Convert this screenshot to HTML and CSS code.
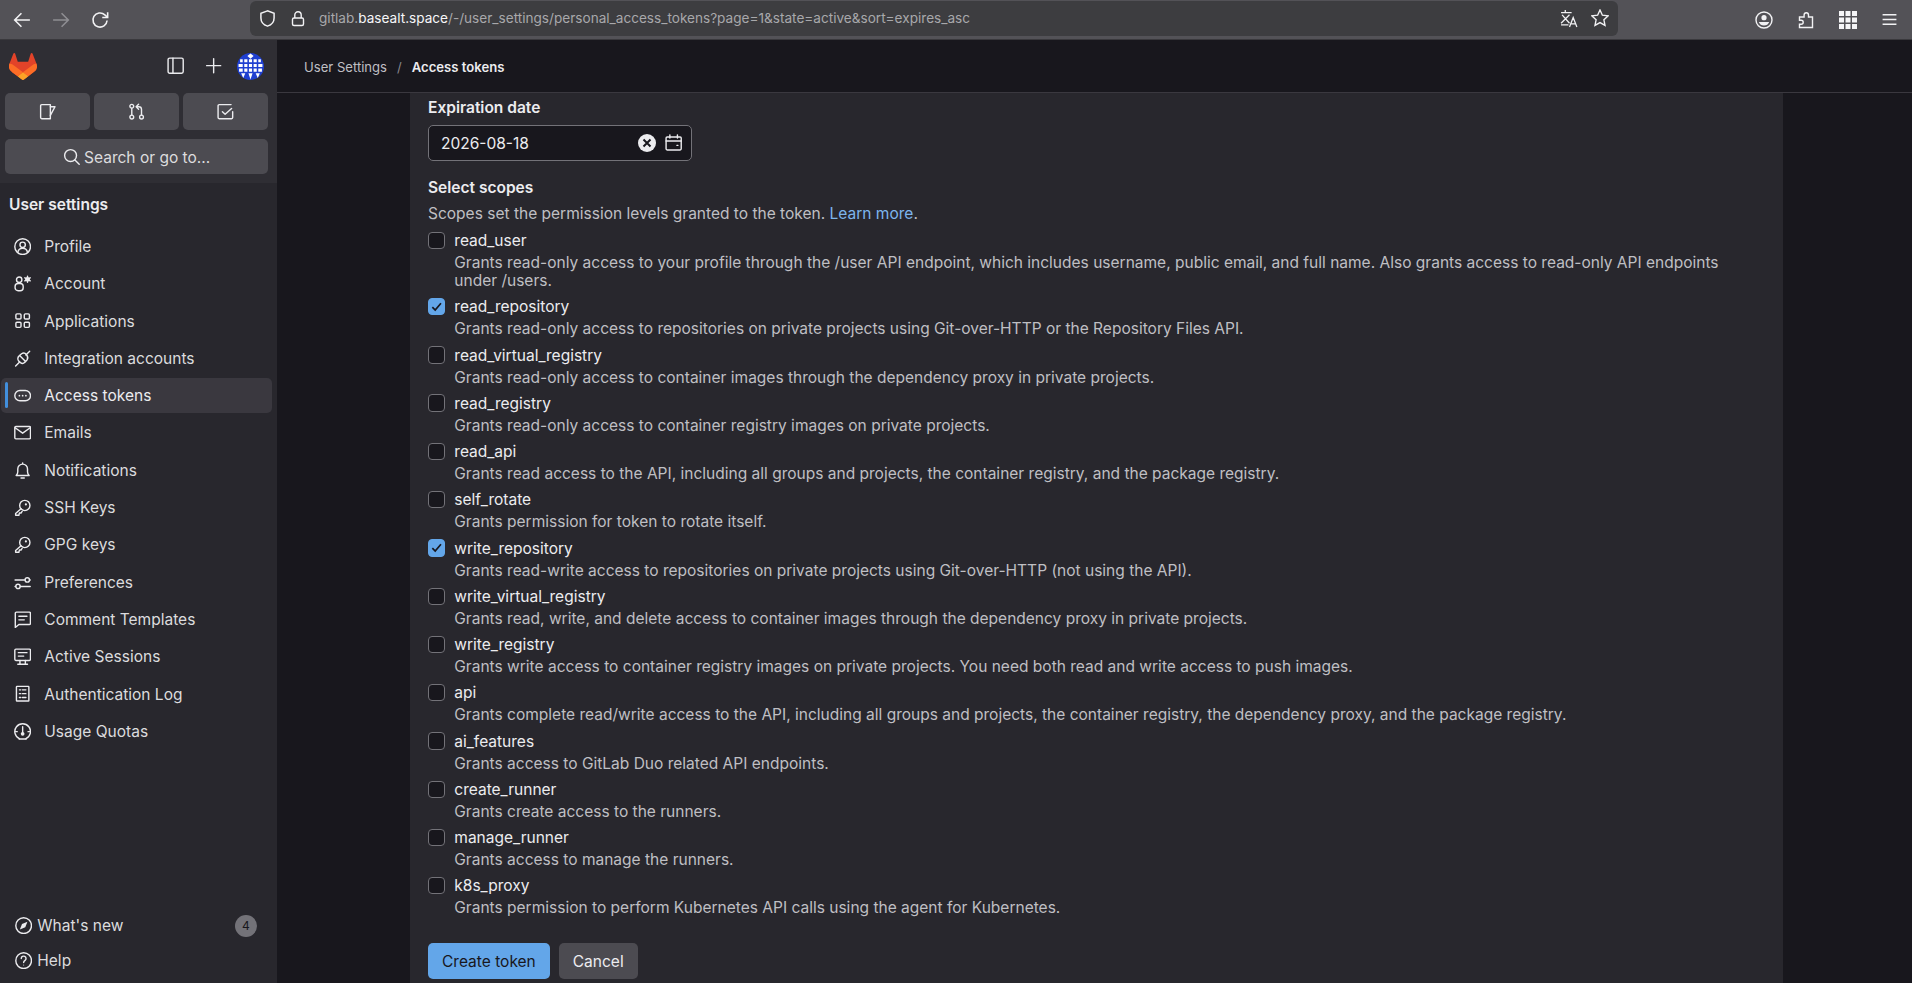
FILE: index.html
```html
<!DOCTYPE html>
<html lang="en">
<head>
<meta charset="utf-8">
<title>Access tokens</title>
<link rel="stylesheet" href="styles.css">
</head>
<body>
<div class="app">
  <header class="toolbar">
    <div class="nav-btns">
      <svg class="tb-ic arrow" viewBox="0 0 16 16"><path d="M15 8H1.500M7.500 2 1.500 8l6 6"/></svg>
      <svg class="tb-ic arrow dim" viewBox="0 0 16 16"><path d="M1 8h13.500M8.500 2l6 6-6 6"/></svg>
      <svg class="tb-ic arrow" viewBox="0 0 16 16"><path d="M14.300 8.500A6.300 6.300 0 1 1 12.300 3.400L14.500 5.500"/><path d="M14.800 1v4.800H10"/></svg>
    </div>
    <div class="urlbar">
      <svg class="tb-ic shield" viewBox="0 0 16 16"><path d="M8 .8 1.800 3v4.500C1.800 11.500 5 14.200 8 15.200c3-1 6.200-3.700 6.200-7.700V3z"/></svg>
      <svg class="tb-ic lock" viewBox="0 0 16 16"><rect x="2.500" y="7.500" width="11" height="7.500" rx="1.500"/><path d="M4.800 7.500V4.500a3.200 3.200 0 0 1 6.400 0v3"/></svg>
      <div class="url"><span class="url-dim">gitlab.</span><span class="url-host">basealt.space</span><span class="url-dim">/-/user_settings/personal_access_tokens?page=1&amp;state=active&amp;sort=expires_asc</span></div>
      <svg class="tb-ic translate" viewBox="0 0 18 18"><path d="M1 3.500h10M5 1v2.500M2 5.500l7 8M9 5.500l-8 8M1 15h7M9 17l3.500-9 3.500 9M10.200 14.200h4.600"/></svg>
      <svg class="tb-ic star" viewBox="0 0 18 18"><path d="m9 1 2.400 5.200 5.600.7-4.100 3.900 1.100 5.600L9 13.600l-5 2.800 1.100-5.600L1 6.900l5.600-.7z"/></svg>
    </div>
    <div class="tb-right">
      <svg class="tb-ic big" viewBox="0 0 18 18"><circle cx="9" cy="9" r="8"/><circle class="solid" cx="9" cy="6.700" r="2.600"/><path class="solid" d="M3.800 11h10.400a5.600 5.600 0 0 1-10.400 0z"/></svg>
      <svg class="tb-ic big" viewBox="0 0 18 18"><path d="M2.500 16.500h13V6h-4V4a2.200 2.200 0 0 0-4.400 0v2H2.500v3.200h1.700a2 2 0 0 1 0 4H2.500z"/></svg>
      <svg class="tb-grid" viewBox="0 0 18 18"><rect width="5" height="5"/><rect x="6.500" width="5" height="5"/><rect x="13" width="5" height="5"/><rect y="6.500" width="5" height="5"/><rect x="6.500" y="6.500" width="5" height="5"/><rect x="13" y="6.500" width="5" height="5"/><rect y="13" width="5" height="5"/><rect x="6.500" y="13" width="5" height="5"/><rect x="13" y="13" width="5" height="5"/></svg>
      <svg class="tb-ic" viewBox="0 0 16 16"><path d="M1.500 3.500h13M1.500 8h13M1.500 12.500h13"/></svg>
    </div>
  </header>
  <div class="body">
    <aside class="sidebar">
      <div class="side-top">
        <div class="side-head">
          <svg class="logo" viewBox="0 0 25 24"><path d="m24.507 9.500-.034-.09L21.082.562a.896.896 0 0 0-1.694.091l-2.290 7.010H7.825L5.535.653a.898.898 0 0 0-1.694-.09L.451 9.411.416 9.500a6.297 6.297 0 0 0 2.090 7.278l.012.01.03.022 5.160 3.867 2.560 1.935 1.554 1.176a1.051 1.051 0 0 0 1.268 0l1.555-1.176 2.560-1.935 5.197-3.890.014-.01A6.297 6.297 0 0 0 24.507 9.500Z" fill="#E24329"/><path d="m24.507 9.500-.034-.09a11.440 11.440 0 0 0-4.560 2.051l-7.447 5.632 4.742 3.584 5.197-3.890.014-.01A6.297 6.297 0 0 0 24.507 9.500Z" fill="#FC6D26"/><path d="m7.707 20.677 2.560 1.935 1.555 1.176a1.051 1.051 0 0 0 1.268 0l1.555-1.176 2.560-1.935-4.743-3.584-4.755 3.584Z" fill="#FCA326"/><path d="M5.010 11.461a11.430 11.430 0 0 0-4.560-2.050l-.034.090a6.297 6.297 0 0 0 2.090 7.278l.012.01.03.022 5.160 3.867 4.745-3.584-7.444-5.632Z" fill="#FC6D26"/></svg>
          <div class="head-icons">
            <svg class="ic" viewBox="0 0 16 16"><rect x="1" y="1" width="14" height="14" rx="1.500"/><path d="M5.500 1v14"/></svg>
            <svg class="ic plus" viewBox="0 0 16 16"><path d="M8 1.500v13M1.500 8h13"/></svg>
            <svg class="avatar" viewBox="0 0 26 26"><circle cx="13" cy="13" r="13" fill="#1f3fd0"/><g fill="#fff"><path d="M13 0.500 16 3 13 5.500 10 3zM7 6h3v3H7zM11.500 6h3v3h-3zM16 6h3v3h-3zM3 6h2.500v3H3zM20.500 6H23v3h-2.500zM7 10.500h3v3H7zM11.500 10.500h3v3h-3zM16 10.500h3v3h-3zM1.500 10.500h4v3h-4zM20.500 10.500h4v3h-4zM7 15h3v3H7zM11.500 15h3v3h-3zM16 15h3v3h-3zM2 15h3.500v3H2zM20.500 15H24v3h-3.500zM4 19.500h4L6 24zM11 19.500h4L13 25.500zM18 19.500h4L20 24z"/></g></svg>
          </div>
        </div>
        <div class="quick">
          <button class="quick-btn"><svg class="ic" viewBox="0 0 16 16"><path d="M2.500 1.500h8v13h-8a1 1 0 0 1-1-1v-11a1 1 0 0 1 1-1z"/><path d="M10.500 3.500h4.300l-4.300 8"/></svg></button>
          <button class="quick-btn"><svg class="ic" viewBox="0 0 16 16"><circle cx="3.500" cy="3" r="1.750"/><circle cx="3.500" cy="13" r="1.750"/><circle cx="12.500" cy="13" r="1.750"/><path d="M3.500 4.750v6.500M12.500 11.250V6a2.500 2.500 0 0 0-2.500-2.500H8M9.800 1.200 7.500 3.500l2.300 2.300"/></svg></button>
          <button class="quick-btn"><svg class="ic" viewBox="0 0 16 16"><path d="M14.500 8v5.500a1 1 0 0 1-1 1H2a1 1 0 0 1-1-1V2.500a1 1 0 0 1 1-1h11"/><path d="m5 8 2.500 2.500L13.500 5"/></svg></button>
        </div>
        <button class="search"><svg class="ic" viewBox="0 0 16 16"><circle cx="7" cy="7" r="5.500"/><path d="m11 11 4 4"/></svg><span>Search or go to...</span></button>
      </div>
      <div class="side-title">User settings</div>
      <nav class="side-nav">
        <a class="nav-item"><svg class="ic" viewBox="0 0 16 16"><circle cx="8" cy="8" r="7.250"/><circle cx="8" cy="6.300" r="2.500"/><path d="M3.500 13.200c.5-2.400 2.300-3.700 4.500-3.700s4 1.300 4.500 3.700"/></svg>Profile</a>
        <a class="nav-item"><svg class="ic" viewBox="0 0 16 16"><circle cx="4.800" cy="4.300" r="2.500"/><rect x="1" y="7.800" width="7.500" height="6.700" rx="2.800"/><circle class="solid" cx="12.500" cy="4" r="2.200"/><path d="M12.500 1.200v5.600M10 2.600l5 2.800M10 5.400l5-2.800"/></svg>Account</a>
        <a class="nav-item"><svg class="ic" viewBox="0 0 16 16"><rect x="1.750" y="1.750" width="4.750" height="4.750" rx="1"/><rect x="9.500" y="1.750" width="4.750" height="4.750" rx="1"/><rect x="1.750" y="9.500" width="4.750" height="4.750" rx="1"/><rect x="9.500" y="9.500" width="4.750" height="4.750" rx="1"/></svg>Applications</a>
        <a class="nav-item"><svg class="ic" viewBox="0 0 16 16"><path d="M1.500 14.800 5 11.300M14.500 1.200 11 4.700"/><path d="M4.800 5.400 7 3.500c1.500-1 3.500-.5 4.600.9s1.600 3.100.6 4.600l-2.200 2.300a3 3 0 0 1-4 .4l-1.600-1.400a3.400 3.400 0 0 1 .4-4.900z"/><path d="m5.200 5.200 5.500 5.500"/></svg>Integration accounts</a>
        <a class="nav-item active"><svg class="ic" viewBox="0 0 16 16"><rect x=".75" y="3.250" width="14.500" height="9.500" rx="4.750"/><circle class="solid" cx="5" cy="8" r=".8"/><circle class="solid" cx="8" cy="8" r=".8"/><circle class="solid" cx="11" cy="8" r=".8"/></svg>Access tokens</a>
        <a class="nav-item"><svg class="ic" viewBox="0 0 16 16"><rect x=".75" y="2.250" width="14.500" height="11.500" rx="1"/><path d="m1 3.500 7 5 7-5"/></svg>Emails</a>
        <a class="nav-item"><svg class="ic" viewBox="0 0 16 16"><path d="M2 12.500c1-1 1.500-2 1.500-3.500V6.500a4.500 4.500 0 0 1 9 0V9c0 1.500.5 2.500 1.500 3.500zM8 .8V2M6.500 14.800h3"/></svg>Notifications</a>
        <a class="nav-item"><svg class="ic" viewBox="0 0 16 16"><circle cx="10" cy="6" r="4.750"/><path d="M6.500 9 1.500 13.500V15h3l.5-2h1.500l1-1.500"/><circle class="solid" cx="11" cy="5" r="1"/></svg>SSH Keys</a>
        <a class="nav-item"><svg class="ic" viewBox="0 0 16 16"><circle cx="10" cy="6" r="4.750"/><path d="M6.500 9 1.500 13.500V15h3l.5-2h1.500l1-1.500"/><circle class="solid" cx="11" cy="5" r="1"/></svg>GPG keys</a>
        <a class="nav-item"><svg class="ic" viewBox="0 0 16 16"><path d="M1 5.500h9M15 5.500h-.5M6 11.500h9M1 11.500h.5"/><circle cx="12.300" cy="5.500" r="2"/><circle cx="3.700" cy="11.500" r="2"/></svg>Preferences</a>
        <a class="nav-item"><svg class="ic" viewBox="0 0 16 16"><path d="M1.200 15.200V2a1 1 0 0 1 1-1h12a1 1 0 0 1 1 1v9.500a1 1 0 0 1-1 1H4.500z"/><path d="M4.500 4.800h7.500M4.500 8.200h5"/></svg>Comment Templates</a>
        <a class="nav-item"><svg class="ic" viewBox="0 0 16 16"><rect x=".75" y="1" width="14.500" height="10.500" rx="1"/><path d="M4 4.300h8M4 7.500h5M5.500 11.500v3M10.500 11.500v3M3.500 15h9"/></svg>Active Sessions</a>
        <a class="nav-item"><svg class="ic" viewBox="0 0 16 16"><rect x="2.250" y="1.250" width="11.500" height="13.500" rx=".5"/><path d="M5 4.500h1.200M7.800 4.500H11M5 8h1.200M7.800 8H11M5 11.500h1.200M7.800 11.500H11"/></svg>Authentication Log</a>
        <a class="nav-item"><svg class="ic" viewBox="0 0 16 16"><path d="M5 14.500a7.250 7.250 0 1 1 6 0"/><path d="M8 3.500V9M1.500 8H3M13 8h1.500M4.700 14.800h6.600"/><circle class="solid" cx="8" cy="10" r="1.700"/></svg>Usage Quotas</a>
      </nav>
      <div class="side-foot">
        <a class="foot-item"><svg class="ic" viewBox="0 0 16 16"><circle cx="8" cy="8" r="7.250"/><path class="solid" d="M11.500 4.500 9.500 9.500l-5 2 2-5z"/></svg><span class="foot-label">What's new</span><span class="badge">4</span></a>
        <a class="foot-item"><svg class="ic" viewBox="0 0 16 16"><circle cx="8" cy="8" r="7.250"/><path d="M5.800 6a2.200 2.200 0 1 1 3.500 1.800c-.8.600-1.300 1-1.300 2"/><circle class="solid" cx="8" cy="12" r=".5"/></svg><span class="foot-label">Help</span></a>
      </div>
    </aside>
    <main class="main">
      <div class="crumbs"><span class="crumb">User Settings</span><span class="crumb-sep">/</span><span class="crumb-cur">Access tokens</span></div>
      <div class="panel">
        <label class="field-label">Expiration date</label>
        <div class="date">
          <span class="date-val">2026-08-18</span>
          <svg class="clear" viewBox="0 0 18 18"><circle cx="9" cy="9" r="9" fill="#ececef"/><path d="m5.500 5.500 7 7M12.500 5.500l-7 7" stroke="#18171d" stroke-width="2"/></svg>
          <svg class="ic" viewBox="0 0 16 16"><rect x="1" y="2.750" width="14" height="12" rx="1"/><path d="M1 6.500h14M4.500 .8v3M11.500 .8v3M11 10.500h1"/></svg>
        </div>
        <div class="field-label scopes-title">Select scopes</div>
        <p class="scopes-help">Scopes set the permission levels granted to the token. <a class="link">Learn more</a>.</p>
        <div class="scope"><span class="cb"></span><div class="scope-text"><div class="scope-name">read_user</div><div class="scope-desc">Grants read-only access to your profile through the /user API endpoint, which includes username, public email, and full name. Also grants access to read-only API endpoints under /users.</div></div></div>
        <div class="scope"><span class="cb on"><svg viewBox="0 0 16 16"><path d="m3.500 8.500 3 3 6-7"/></svg></span><div class="scope-text"><div class="scope-name">read_repository</div><div class="scope-desc">Grants read-only access to repositories on private projects using Git-over-HTTP or the Repository Files API.</div></div></div>
        <div class="scope"><span class="cb"></span><div class="scope-text"><div class="scope-name">read_virtual_registry</div><div class="scope-desc">Grants read-only access to container images through the dependency proxy in private projects.</div></div></div>
        <div class="scope"><span class="cb"></span><div class="scope-text"><div class="scope-name">read_registry</div><div class="scope-desc">Grants read-only access to container registry images on private projects.</div></div></div>
        <div class="scope"><span class="cb"></span><div class="scope-text"><div class="scope-name">read_api</div><div class="scope-desc">Grants read access to the API, including all groups and projects, the container registry, and the package registry.</div></div></div>
        <div class="scope"><span class="cb"></span><div class="scope-text"><div class="scope-name">self_rotate</div><div class="scope-desc">Grants permission for token to rotate itself.</div></div></div>
        <div class="scope"><span class="cb on"><svg viewBox="0 0 16 16"><path d="m3.500 8.500 3 3 6-7"/></svg></span><div class="scope-text"><div class="scope-name">write_repository</div><div class="scope-desc">Grants read-write access to repositories on private projects using Git-over-HTTP (not using the API).</div></div></div>
        <div class="scope"><span class="cb"></span><div class="scope-text"><div class="scope-name">write_virtual_registry</div><div class="scope-desc">Grants read, write, and delete access to container images through the dependency proxy in private projects.</div></div></div>
        <div class="scope"><span class="cb"></span><div class="scope-text"><div class="scope-name">write_registry</div><div class="scope-desc">Grants write access to container registry images on private projects. You need both read and write access to push images.</div></div></div>
        <div class="scope"><span class="cb"></span><div class="scope-text"><div class="scope-name">api</div><div class="scope-desc">Grants complete read/write access to the API, including all groups and projects, the container registry, the dependency proxy, and the package registry.</div></div></div>
        <div class="scope"><span class="cb"></span><div class="scope-text"><div class="scope-name">ai_features</div><div class="scope-desc">Grants access to GitLab Duo related API endpoints.</div></div></div>
        <div class="scope"><span class="cb"></span><div class="scope-text"><div class="scope-name">create_runner</div><div class="scope-desc">Grants create access to the runners.</div></div></div>
        <div class="scope"><span class="cb"></span><div class="scope-text"><div class="scope-name">manage_runner</div><div class="scope-desc">Grants access to manage the runners.</div></div></div>
        <div class="scope"><span class="cb"></span><div class="scope-text"><div class="scope-name">k8s_proxy</div><div class="scope-desc">Grants permission to perform Kubernetes API calls using the agent for Kubernetes.</div></div></div>
        <div class="actions"><button class="btn primary">Create token</button><button class="btn">Cancel</button></div>
      </div>
    </main>
  </div>
</div>
</body>
</html>
```
FILE: styles.css
```css
* { box-sizing: border-box; }
html, body { margin: 0; height: 100%; overflow: hidden; background: #18171d; }
body { font-family: Inter, "Noto Sans", sans-serif; font-size: 15.52px; color: #ececef; }
p { margin: 0; }
button { font: inherit; color: inherit; border: 0; }
svg { display: block; flex: none; }

.app { display: flex; flex-direction: column; height: 983px; }

.toolbar { height: 40px; flex: none; display: flex; align-items: center; background: #535257; border-bottom: 1px solid #3a393d; }
.tb-ic { width: 17px; height: 17px; fill: none; stroke: #f2f2f4; stroke-width: 1.4; }
.tb-ic .solid { fill: #f2f2f4; stroke: none; }
.tb-ic.dim { stroke: #8f8e93; }
.tb-ic.arrow { width: 18px; height: 18px; }
.tb-ic.big { width: 18px; height: 18px; }
.nav-btns { display: flex; align-items: center; gap: 21px; padding-left: 13px; width: 250px; }
.urlbar { width: 1368px; height: 35px; margin-top: -3px; background: #3d3d40; border-radius: 6px; display: flex; align-items: center; padding-left: 10px; }
.shield { margin-left: -1px; }
.lock { margin-left: 14px; width: 16px; }
.url { margin-left: 13px; font-size: 13.6px; flex: 1; white-space: nowrap; color: #a8a8ab; }
.url-host { color: #f7f7f9; }
.translate { margin-right: 12px; width: 19px; height: 19px; stroke-width: 1.2; }
.star { margin-right: 9px; width: 18px; height: 18px; }
.tb-right { flex: 1; display: flex; align-items: center; justify-content: flex-end; gap: 24px; padding-right: 14px; }
.tb-grid { width: 18px; height: 18px; fill: #f5f5f7; }

.body { flex: 1; min-height: 0; display: flex; }

.sidebar { width: 277px; flex: none; display: flex; flex-direction: column; background: #28272d; }
.side-top { background: #2f2e34; height: 143px; padding: 12px 9px 0 5px; flex: none; }
.side-head { display: flex; align-items: center; justify-content: space-between; padding: 1px 4px 0 4px; height: 27px; }
.logo { width: 28px; height: 27px; }
.head-icons { display: flex; align-items: center; }
.ic { width: 17.300px; height: 17.300px; fill: none; stroke: #ececef; stroke-width: 1.300; stroke-linecap: round; stroke-linejoin: round; }
.ic .solid { fill: #ececef; stroke: none; }
.plus { margin: 0 15px 0 20px; }
.avatar { width: 27px; height: 27px; }
.quick { display: grid; grid-template-columns: repeat(3, 1fr); gap: 4.500px; margin-top: 14px; }
.quick-btn { height: 37px; background: #4c4b51; border-radius: 5px; display: flex; align-items: center; justify-content: center; }
.search { margin-top: 9px; width: 100%; height: 35px; padding-bottom: 0; background: #4c4b51; border-radius: 5px; display: flex; align-items: center; justify-content: center; gap: 4px; color: #dcdcde; line-height: 37px; }
.side-title { padding: 12px 9px 0; height: 46px; font-weight: 600; color: #ececef; }
.side-nav { display: flex; flex-direction: column; gap: 2.300px; padding: 0 5px 0 1px; flex: 1; }
.nav-item { height: 35px; display: flex; align-items: center; gap: 13px; padding-left: 13px; border-radius: 5px; color: #dcdcde; position: relative; }
.nav-item.active { background: #3a383f; color: #ececef; }
.nav-item.active::before { content: ""; position: absolute; left: 4px; top: 4px; height: 26px; width: 3px; background: #428fdc; border-radius: 2px; }
.side-foot { padding: 0 20px 5px 15px; display: flex; flex-direction: column; }
.foot-item { height: 35px; display: flex; align-items: center; gap: 5px; color: #dcdcde; }
.foot-label { flex: 1; }
.badge { width: 22px; height: 22px; border-radius: 50%; background: #737278; color: #18171d; font-size: 12px; display: flex; align-items: center; justify-content: center; }

.main { flex: 1; min-width: 0; display: flex; flex-direction: column; }
.crumbs { height: 53px; flex: none; display: flex; align-items: center; padding-left: 27px; padding-top: 1px; font-size: 13.1px; border-bottom: 1px solid #3a383f; }
.crumb { color: #bfbfc3; }
.crumb-sep { color: #89888d; margin: 0 10px; }
.crumb-cur { font-weight: 600; color: #ececef; }
.panel { width: 1373px; margin-left: 133px; flex: 1; background: #28272d; padding: 4px 18px 0; overflow: hidden; }
.field-label { display: block; font-weight: 600; line-height: 22px; color: #ececef; }
.date { margin-top: 6px; width: 264px; height: 36px; background: #18171d; border: 1px solid #737278; border-radius: 5px; display: flex; align-items: center; padding: 0 9px 0 12px; }
.date-val { flex: 1; }
.clear { width: 18px; height: 18px; margin-right: 9px; }
.scopes-title { margin-top: 16px; }
.scopes-help { margin-top: 4px; line-height: 22px; color: #bfbfc3; }
.link { color: #7db5ec; }
.scope { display: flex; gap: 9px; margin-top: 5.270px; }
.scopes-help + .scope { margin-top: 4px; }
.cb { width: 17.300px; height: 17.300px; margin-top: 2.700px; flex: none; background: #18171d; border: 1px solid #737278; border-radius: 4px; display: block; }
.cb.on { background: #63a6e9; border-color: #63a6e9; }
.cb svg { width: 100%; height: 100%; fill: none; stroke: #18171d; stroke-width: 1.800; }
.scope-name { line-height: 24px; color: #ececef; }
.scope-desc { line-height: 18px; color: #bfbfc3; margin-top: 1px; }
.scope-text { flex: 1; min-width: 0; }
.actions { display: flex; gap: 9px; margin-top: 26px; }
.btn { height: 36px; padding: 0 14px; background: #4c4b51; border-radius: 5px; color: #ececef; }
.btn.primary { background: #63a6e9; color: #18171d; }
```
